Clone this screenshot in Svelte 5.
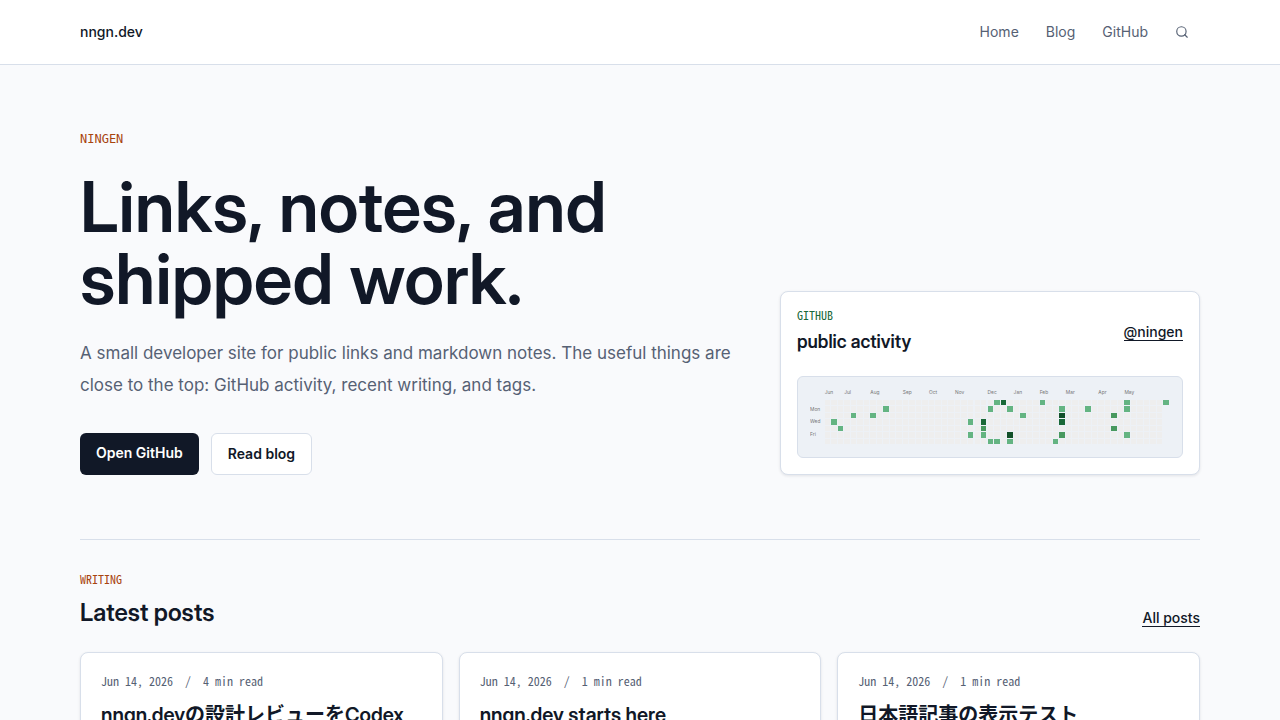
<script>
	const months = [
		['Jun', 0],
		['Jul', 3],
		['Aug', 7],
		['Sep', 12],
		['Oct', 16],
		['Nov', 20],
		['Dec', 25],
		['Jan', 29],
		['Feb', 33],
		['Mar', 37],
		['Apr', 42],
		['May', 46]
	];
	const days = [
		['Mon', 40],
		['Wed', 62],
		['Fri', 87]
	];
	const shades = ['#eeeeee', '#64b482', '#48995f', '#196838', '#12502a'];

	// "week-day": level
	const activity = {
		'1-3': 1,
		'2-4': 1,
		'4-2': 1,
		'7-2': 1,
		'9-1': 1,
		'22-3': 1,
		'22-5': 1,
		'24-3': 3,
		'24-4': 2,
		'24-5': 1,
		'25-1': 1,
		'25-6': 1,
		'26-0': 1,
		'26-6': 1,
		'27-0': 3,
		'28-1': 1,
		'28-5': 4,
		'28-6': 1,
		'30-2': 1,
		'33-0': 1,
		'35-6': 1,
		'36-1': 1,
		'36-2': 4,
		'36-3': 3,
		'36-5': 2,
		'40-1': 1,
		'44-2': 2,
		'44-4': 2,
		'46-0': 1,
		'46-1': 1,
		'46-5': 1,
		'52-0': 1
	};

	const cells = Array.from({ length: 365 }, (_, i) => {
		const week = Math.floor(i / 7);
		const day = i % 7;
		return { week, day, level: activity[`${week}-${day}`] ?? 0 };
	});

	const posts = [
		{ date: 'Jun 14, 2026', minutes: 4, title: 'nngn.devの設計レビューをCodexに頼んだ' },
		{ date: 'Jun 14, 2026', minutes: 1, title: 'nngn.dev starts here' },
		{ date: 'Jun 14, 2026', minutes: 1, title: '日本語記事の表示テスト' }
	];
</script>

<header>
	<div class="container bar">
		<a href="/" class="brand">nngn.dev</a>
		<nav>
			<a href="/">Home</a>
			<a href="/blog">Blog</a>
			<a href="https://github.com">GitHub</a>
			<button class="search" aria-label="Search">
				<svg width="14" height="14" viewBox="0 0 24 24" fill="none" stroke="currentColor" stroke-width="2" stroke-linecap="round">
					<circle cx="11" cy="11" r="8" />
					<path d="m21 21-4.3-4.3" />
				</svg>
			</button>
		</nav>
	</div>
</header>

<main class="container">
	<section class="hero">
		<div>
			<p class="eyebrow large">NINGEN</p>
			<h1>Links, notes, and shipped work.</h1>
			<p class="lead">
				A small developer site for public links and markdown notes. The useful things are close to the
				top: GitHub activity, recent writing, and tags.
			</p>
			<div class="actions">
				<a href="https://github.com" class="button primary">Open GitHub</a>
				<a href="/blog" class="button">Read blog</a>
			</div>
		</div>

		<aside class="card github">
			<div class="github-head">
				<div>
					<p class="eyebrow green">GITHUB</p>
					<h2>public activity</h2>
				</div>
				<a href="https://github.com" class="underlined">@ningen</a>
			</div>
			<div class="chart">
				<svg viewBox="0 0 663 104" role="img" aria-label="GitHub contributions">
					{#each months as [name, week]}
						<text x={27 + week * 12} y="10">{name}</text>
					{/each}
					{#each days as [name, y]}
						<text x="0" {y}>{name}</text>
					{/each}
					{#each cells as { week, day, level }}
						<rect x={27 + week * 12} y={20 + day * 12} width="10" height="10" fill={shades[level]} />
					{/each}
				</svg>
			</div>
		</aside>
	</section>

	<section class="latest">
		<div class="latest-head">
			<div>
				<p class="eyebrow">WRITING</p>
				<h2>Latest posts</h2>
			</div>
			<a href="/blog" class="underlined">All posts</a>
		</div>
		<div class="posts">
			{#each posts as post}
				<article class="card post">
					<p class="meta">
						<time>{post.date}</time>
						<span>/</span>
						<span>{post.minutes} min read</span>
					</p>
					<h3><a href="/blog">{post.title}</a></h3>
				</article>
			{/each}
		</div>
	</section>
</main>

<style>
	:global(body) {
		margin: 0;
		background: #f9fafc;
		color: #111827;
		font-family: Inter, 'Noto Sans CJK JP', sans-serif;
	}
	h1,
	h2,
	h3,
	p {
		margin: 0;
	}
	h1,
	h2,
	h3 {
		font-family: 'Inter Display', Inter, 'Noto Sans CJK JP', sans-serif;
	}
	a {
		color: inherit;
		text-decoration: none;
	}
	.container {
		max-width: 1120px;
		margin: 0 auto;
		padding: 0 32px;
	}
	header {
		background: #fff;
		border-bottom: 1px solid #d8dfea;
	}
	.bar {
		height: 64px;
		display: flex;
		align-items: center;
		justify-content: space-between;
	}
	.brand {
		font-size: 14px;
		font-weight: 500;
		line-height: 18px;
	}
	nav {
		display: flex;
		align-items: center;
		gap: 27px;
		color: #566174;
		font-size: 14px;
		line-height: 18px;
	}
	.search {
		display: flex;
		padding: 0 11px 0 0;
		border: none;
		background: none;
		color: inherit;
		cursor: pointer;
	}
	.hero {
		display: grid;
		grid-template-columns: minmax(0, 1fr) 420px;
		gap: 40px;
		align-items: end;
		padding: 64px 0;
		border-bottom: 1px solid #d8dfea;
	}
	.eyebrow {
		color: #a8440f;
		font-family: 'Noto Sans Mono CJK JP', 'Liberation Mono', monospace;
		font-size: 12px;
		line-height: 14px;
	}
	.large {
		font-family: 'DejaVu Sans Mono', monospace;
		line-height: 20px;
	}
	.green {
		color: #19683a;
	}
	h1 {
		margin-top: 22px;
		font-size: 70px;
		font-weight: 600;
		line-height: 72px;
	}
	.lead {
		margin-top: 22px;
		color: #566174;
		font-size: 17px;
		line-height: 32px;
	}
	.actions {
		display: flex;
		gap: 12px;
		margin-top: 32px;
	}
	.button {
		padding: 10px 16px;
		border: 1px solid #d8dfea;
		border-radius: 6px;
		background: #fff;
		font-size: 14px;
		font-weight: 600;
		line-height: 20px;
	}
	.primary {
		border: none;
		background: #111827;
		color: #fff;
	}
	.card {
		border: 1px solid #d8dfea;
		border-radius: 8px;
		background: #fff;
		box-shadow: 0 1px 3px rgba(17, 24, 39, 0.1);
	}
	.github {
		padding: 16px;
	}
	.github-head {
		display: flex;
		align-items: center;
		justify-content: space-between;
	}
	.github h2 {
		margin-top: 6px;
		font-size: 18px;
		font-weight: 600;
		line-height: 28px;
	}
	.underlined {
		border-bottom: 1px solid #111827;
		font-size: 14px;
		font-weight: 500;
		line-height: 17px;
	}
	.chart {
		margin-top: 20px;
		padding: 12px;
		border: 1px solid #d8dfea;
		border-radius: 6px;
		background: #edf1f6;
	}
	.chart svg {
		display: block;
		width: 100%;
	}
	.chart text {
		fill: #767676;
		font-size: 9px;
	}
	.chart rect {
		shape-rendering: crispEdges;
	}
	.latest {
		padding: 32px 0;
	}
	.latest-head {
		display: flex;
		align-items: end;
		justify-content: space-between;
		margin-bottom: 25px;
	}
	.latest h2 {
		margin-top: 13px;
		font-size: 24px;
		font-weight: 600;
		line-height: 28px;
	}
	.posts {
		display: grid;
		grid-template-columns: repeat(3, minmax(0, 1fr));
		gap: 16px;
	}
	.post {
		padding: 20px;
	}
	.meta {
		display: flex;
		gap: 12px;
		color: #566174;
		font-family: 'Noto Sans Mono CJK JP', 'Liberation Mono', monospace;
		font-size: 12px;
		line-height: 16px;
	}
	h3 {
		margin-top: 12px;
		font-size: 20px;
		font-weight: 600;
		line-height: 28px;
	}
</style>
